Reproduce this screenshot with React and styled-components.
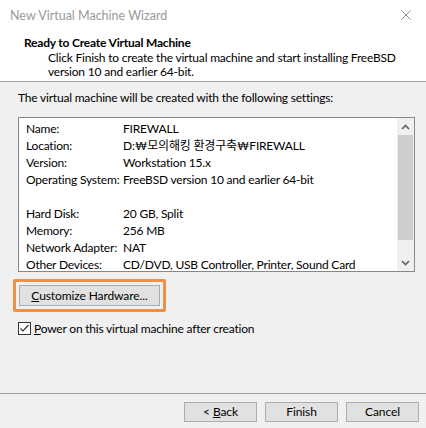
import React from "react";
import styled, { createGlobalStyle } from "styled-components";

const GlobalStyle = createGlobalStyle`
  html, body {
    margin: 0;
    padding: 0;
    background: #f0f0f0;
  }
  body {
    font-family: Lato, "Noto Sans CJK KR", sans-serif;
    font-size: 12px;
    letter-spacing: -0.2px;
    color: #000;
  }
`;

const Window = styled.div`
  width: 426px;
  height: 428px;
  display: flex;
  flex-direction: column;
  background: #f0f0f0;
  overflow: hidden;
`;

const TitleBar = styled.div`
  height: 30px;
  flex: none;
  background: #fff;
  display: flex;
  align-items: center;
  justify-content: space-between;
  padding: 0 10px 0 10px;
  box-sizing: border-box;
  color: #999;
  font-size: 12.5px;
  letter-spacing: 0;
`;

const CloseIcon = styled.svg`
  width: 10px;
  height: 10px;
  margin-right: 5px;
`;

const Header = styled.div`
  height: 52px;
  flex: none;
  background: #fff;
  border-bottom: 1px solid #a0a0a0;
  box-sizing: border-box;
  padding: 5px 0 0 24px;
  white-space: nowrap;
`;

const Heading = styled.div`
  font-weight: bold;
  line-height: 16px;
`;

const Description = styled.div`
  padding-left: 24px;
  line-height: 13.5px;
`;

const Body = styled.div`
  flex: 1;
  display: flex;
  flex-direction: column;
  padding: 8px 11px 0 18px;
`;

const Intro = styled.div`
  line-height: 16px;
  margin-bottom: 11px;
`;

const ListBox = styled.div`
  height: 155px;
  background: #fff;
  border: 1px solid #828790;
  box-sizing: border-box;
  display: flex;
`;

const Rows = styled.div`
  flex: 1;
  padding: 2px 0 0 7px;
`;

const Row = styled.div`
  display: grid;
  grid-template-columns: 97px 1fr;
  height: 17px;
  line-height: 17px;
  white-space: nowrap;
`;

const ScrollBar = styled.div`
  width: 17px;
  display: flex;
  flex-direction: column;
  background: #f0f0f0;
`;

const ArrowBox = styled.div`
  height: 17px;
  display: flex;
  align-items: center;
  justify-content: center;
`;

const Track = styled.div`
  flex: 1;
  display: flex;
  flex-direction: column;
  padding-bottom: 12px;
`;

const Thumb = styled.div`
  height: 105px;
  background: #cdcdcd;
  margin: 0 1px;
`;

const FocusRing = styled.div`
  align-self: flex-start;
  margin: 7px 0 0 -5px;
  border: 3px solid #ee9147;
  border-radius: 2px;
  padding: 3px;
`;

const Button = styled.button`
  font-family: inherit;
  font-size: 12px;
  letter-spacing: -0.1px;
  color: #000;
  background: #e1e1e1;
  border: 1px solid #adadad;
  height: ${(p) => p.h || 21}px;
  width: ${(p) => p.w}px;
  padding: 0;
  margin: 0;
  line-height: 1;
  cursor: default;
`;

const CheckRow = styled.label`
  display: flex;
  align-items: center;
  gap: 3px;
  margin-top: 9px;
`;

const CheckBox = styled.span`
  width: 13px;
  height: 13px;
  box-sizing: border-box;
  border: 1px solid #333;
  background: #fff;
  display: flex;
  align-items: center;
  justify-content: center;
`;

const Footer = styled.div`
  height: 35px;
  flex: none;
  border-top: 1px solid #a0a0a0;
  box-sizing: border-box;
  display: flex;
  justify-content: flex-end;
  align-items: flex-start;
  gap: 8px;
  padding: 8px 7px 0 0;
`;

const Arrow = ({ up }) => (
  <svg width="9" height="6" viewBox="0 0 9 6">
    <path
      d={up ? "M1 5 L4.5 1.5 L8 5" : "M1 1 L4.5 4.5 L8 1"}
      fill="none"
      stroke="#606060"
      strokeWidth="1.6"
    />
  </svg>
);

const settings = [
  ["Name:", "FIREWALL"],
  ["Location:", "D:₩모의해킹 환경구축₩FIREWALL"],
  ["Version:", "Workstation 15.x"],
  ["Operating System:", "FreeBSD version 10 and earlier 64-bit"],
  ["", ""],
  ["Hard Disk:", "20 GB, Split"],
  ["Memory:", "256 MB"],
  ["Network Adapter:", "NAT"],
  ["Other Devices:", "CD/DVD, USB Controller, Printer, Sound Card"],
];

export default function App() {
  return (
    <Window>
      <GlobalStyle />
      <TitleBar>
        <span>New Virtual Machine Wizard</span>
        <CloseIcon viewBox="0 0 10 10">
          <path d="M0.5 0.5 L9.5 9.5 M9.5 0.5 L0.5 9.5" stroke="#8a8a8a" strokeWidth="1" />
        </CloseIcon>
      </TitleBar>
      <Header>
        <Heading>Ready to Create Virtual Machine</Heading>
        <Description>
          Click Finish to create the virtual machine and start installing FreeBSD
          <br />
          version 10 and earlier 64-bit.
        </Description>
      </Header>
      <Body>
        <Intro>The virtual machine will be created with the following settings:</Intro>
        <ListBox>
          <Rows>
            {settings.map(([k, v], i) => (
              <Row key={i}>
                <span>{k}</span>
                <span>{v}</span>
              </Row>
            ))}
          </Rows>
          <ScrollBar>
            <ArrowBox>
              <Arrow up />
            </ArrowBox>
            <Track>
              <Thumb />
            </Track>
            <ArrowBox>
              <Arrow />
            </ArrowBox>
          </ScrollBar>
        </ListBox>
        <FocusRing>
          <Button w={141}>
            <u>C</u>ustomize Hardware...
          </Button>
        </FocusRing>
        <CheckRow>
          <CheckBox>
            <svg width="11" height="11" viewBox="0 0 11 11">
              <path d="M1.5 5.5 L4 8 L9.5 2" fill="none" stroke="#333" strokeWidth="1.2" />
            </svg>
          </CheckBox>
          <span>
            <u>P</u>ower on this virtual machine after creation
          </span>
        </CheckRow>
      </Body>
      <Footer>
        <Button w={73} h={20}>
          &lt; <u>B</u>ack
        </Button>
        <Button w={73} h={20}>
          Finish
        </Button>
        <Button w={73} h={20}>
          Cancel
        </Button>
      </Footer>
    </Window>
  );
}
